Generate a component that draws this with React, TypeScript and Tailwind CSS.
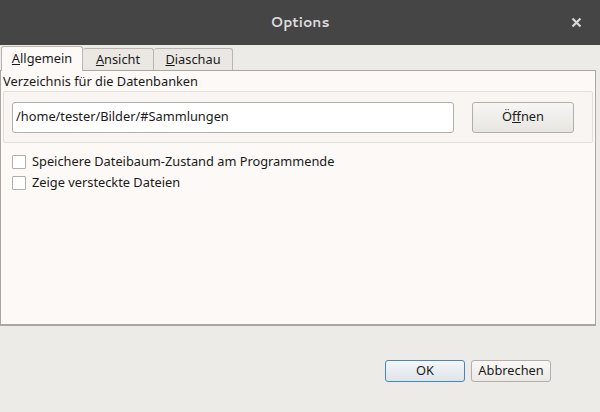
export default function App() {
  return (
    <div className="w-[600px] h-[412px] bg-[#edebe7] flex flex-col text-[12.8px] text-[#1a1a1a] font-['Noto_Sans',sans-serif] overflow-hidden">
      <div className="h-[45px] shrink-0 bg-[#454545] flex items-center justify-center relative">
        <span className="text-[#dcdcdc] font-bold text-[14px] font-['Cantarell','Noto_Sans',sans-serif]">Options</span>
        <span className="absolute left-[569px] top-[12px] leading-none">
          <svg width="16" height="20" viewBox="0 0 16 20">
            <path d="M3.5 6.5 L11.5 14.5 M11.5 6.5 L3.5 14.5" stroke="#d8d8d8" strokeWidth="2.2" />
          </svg>
        </span>
      </div>

      <div className="flex items-end h-[25px] pl-[1px]">
        <div className="h-[25px] w-[82px] bg-[#fcf9f6] border border-b-0 border-[#b9b6b2] rounded-t-[3px] flex items-center justify-center relative z-10 -mb-px">
          <span><u>A</u>llgemein</span>
        </div>
        <div className="h-[22px] w-[71px] bg-[#ebe8e4] border border-b-0 border-l-0 border-[#b9b6b2] rounded-t-[3px] flex items-center justify-center">
          <span><u>A</u>nsicht</span>
        </div>
        <div className="h-[22px] w-[79px] bg-[#ebe8e4] border border-b-0 border-l-0 border-[#b9b6b2] rounded-t-[3px] flex items-center justify-center">
          <span><u>D</u>iaschau</span>
        </div>
      </div>

      <div className="w-[596px] h-[256px] bg-[#fcf9f6] border border-[#aaa7a3] border-b-2 flex flex-col pl-[2px] pr-[2px]">
        <div className="h-[20px] flex items-center leading-none">Verzeichnis für die Datenbanken</div>
        <div className="h-[52px] border border-[#e2dfdb] rounded-[2px] bg-[#f8f5f2] flex items-center pl-[8px] pr-[18px] gap-[18px]">
          <div className="w-[442px] h-[31px] bg-white border border-[#b2afab] rounded-[3px] flex items-center px-[3px]">
            /home/tester/Bilder/#Sammlungen
          </div>
          <div className="w-[102px] h-[31px] border border-[#b2afab] rounded-[3px] bg-gradient-to-b from-[#f7f6f4] to-[#e8e6e3] flex items-center justify-center">
            <span>Ö<u>f</u>fnen</span>
          </div>
        </div>
        <div className="flex flex-col gap-[7px] pl-[9px] mt-[12px]">
          <label className="flex items-center gap-[6px] h-[14px]">
            <span className="w-[14px] h-[14px] bg-white border border-[#b2afab] rounded-[1px]" />
            Speichere Dateibaum-Zustand am Programmende
          </label>
          <label className="flex items-center gap-[6px] h-[14px]">
            <span className="w-[14px] h-[14px] bg-white border border-[#b2afab] rounded-[1px]" />
            Zeige versteckte Dateien
          </label>
        </div>
      </div>

      <div className="flex justify-end gap-[6px] pr-[49px] mt-[34px]">
        <div className="w-[80px] h-[22px] border border-[#4a86b5] rounded-[3px] bg-gradient-to-b from-[#f4f6f8] to-[#dfe5ea] flex items-center justify-center">
          OK
        </div>
        <div className="w-[80px] h-[22px] border border-[#b2afab] rounded-[3px] bg-gradient-to-b from-[#f9f8f7] to-[#ebe9e6] flex items-center justify-center">
          Abbrechen
        </div>
      </div>
    </div>
  );
}
